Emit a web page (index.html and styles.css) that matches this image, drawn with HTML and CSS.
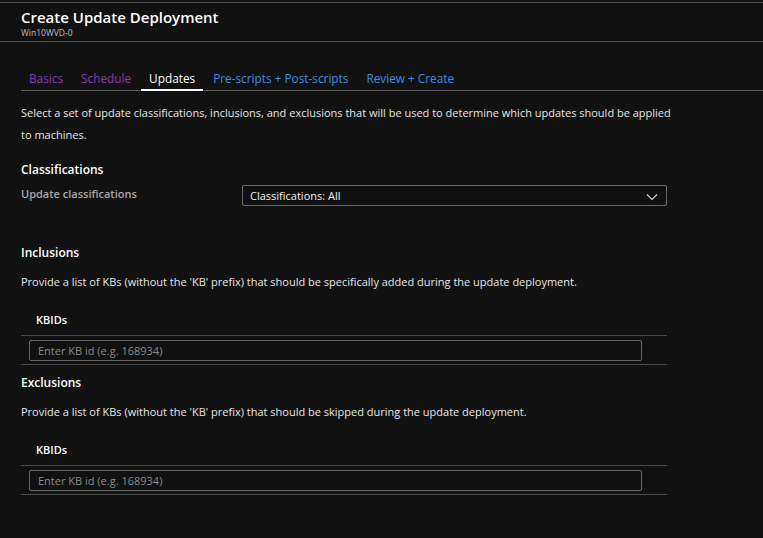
FILE: index.html
```html
<!DOCTYPE html>
<html>
<head>
<meta charset="utf-8">
<link rel="stylesheet" href="styles.css">
</head>
<body>
<div class="page">
  <header class="blade-header">
    <h1 class="title">Create Update Deployment</h1>
    <div class="subtitle">Win10WVD-0</div>
  </header>
  <main class="content">
    <nav class="tabs">
      <span class="tab visited">Basics</span>
      <span class="tab visited">Schedule</span>
      <span class="tab active">Updates</span>
      <span class="tab link">Pre-scripts + Post-scripts</span>
      <span class="tab link">Review + Create</span>
    </nav>
    <p class="intro">Select a set of update classifications, inclusions, and exclusions that will be used to determine which updates should be applied to machines.</p>

    <h2 class="section first">Classifications</h2>
    <div class="field-row">
      <label class="field-label">Update classifications</label>
      <div class="dropdown">
        <span>Classifications: All</span>
        <svg class="chev" width="12" height="8" viewBox="0 0 12 8"><path d="M1 1.5 L6 6.5 L11 1.5" fill="none" stroke="#d0d0d0" stroke-width="1.2"/></svg>
      </div>
    </div>

    <h2 class="section inclusions">Inclusions</h2>
    <p class="desc">Provide a list of KBs (without the 'KB' prefix) that should be specifically added during the update deployment.</p>
    <div class="kb-table">
      <div class="kb-head">KBIDs</div>
      <div class="kb-row"><div class="kb-input">Enter KB id (e.g. 168934)</div></div>
    </div>

    <h2 class="section exclusions">Exclusions</h2>
    <p class="desc">Provide a list of KBs (without the 'KB' prefix) that should be skipped during the update deployment.</p>
    <div class="kb-table">
      <div class="kb-head">KBIDs</div>
      <div class="kb-row"><div class="kb-input">Enter KB id (e.g. 168934)</div></div>
    </div>
  </main>
</div>
</body>
</html>
```
FILE: styles.css
```css
html, body {
  margin: 0;
  padding: 0;
  background: #111111;
}
body {
  font-family: "Open Sans", "Noto Sans", sans-serif;
  color: #e6e6e6;
  font-size: 11px;
}
.page {
  padding-top: 2px;
  width: 763px;
  height: 536px;
  overflow: hidden;
}
.blade-header {
  border-top: 1px solid #505050;
  border-bottom: 1px solid #505050;
  padding: 4px 21px 0;
  box-sizing: border-box;
  height: 40px;
}
.title {
  margin: 0;
  font-size: 15px;
  font-weight: 600;
  line-height: 21px;
  color: #ffffff;
}
.subtitle {
  font-size: 8.5px;
  line-height: 10px;
  color: #bdbdbd;
}
.content {
  padding-left: 21px;
}
.tabs {
  display: flex;
  gap: 2px;
  margin-top: 26px;
  border-bottom: 1px solid #5a5a5a;
}
.tab {
  position: relative;
  padding: 0 8px 2px;
  line-height: 20px;
  font-size: 11.8px;
}
.tab.visited { color: #8a3ab9; }
.tab.link { color: #3d8ce6; }
.tab.active { color: #ffffff; }
.tab.active::after {
  content: "";
  position: absolute;
  left: 0;
  right: 0;
  bottom: -1px;
  height: 2px;
  background: #ffffff;
}
.intro {
  margin: 11px 0 0;
  width: 655px;
  line-height: 22px;
  color: #e6e6e6;
}
.section {
  margin: 0;
  font-size: 12px;
  font-weight: 600;
  line-height: 20px;
  color: #ffffff;
}
.section.first { margin-top: 14px; }
.field-row {
  display: flex;
  align-items: flex-start;
  margin-top: 4px;
}
.field-label {
  width: 221px;
  color: #a8a8a8;
  line-height: 16px;
  font-weight: 600;
  margin-top: 2px;
}
.dropdown {
  width: 425px;
  height: 21px;
  box-sizing: border-box;
  border: 1px solid #6a6a6a;
  border-radius: 2px;
  display: flex;
  align-items: center;
  justify-content: space-between;
  padding: 0 8px 0 7px;
  color: #f0f0f0;
  margin-top: 1px;
}
.chev { margin-top: 2px; }
.section.inclusions { margin-top: 37px; }
.section.exclusions { margin-top: 8px; }
.desc {
  margin: 10px 0 0;
  line-height: 18px;
  color: #e6e6e6;
}
.kb-table {
  width: 646px;
  margin-top: 20px;
}
.kb-head {
  padding-left: 15px;
  font-weight: 600;
  color: #ffffff;
  line-height: 18px;
  height: 24px;
  border-bottom: 1px solid #4a4a4a;
}
.kb-row {
  padding: 4px 0 3px 8px;
  border-bottom: 1px solid #4a4a4a;
}
.kb-input {
  width: 613px;
  height: 21px;
  box-sizing: border-box;
  border: 1px solid #666666;
  border-radius: 2px;
  padding-left: 8px;
  line-height: 19px;
  color: #8a8a8a;
}
```
